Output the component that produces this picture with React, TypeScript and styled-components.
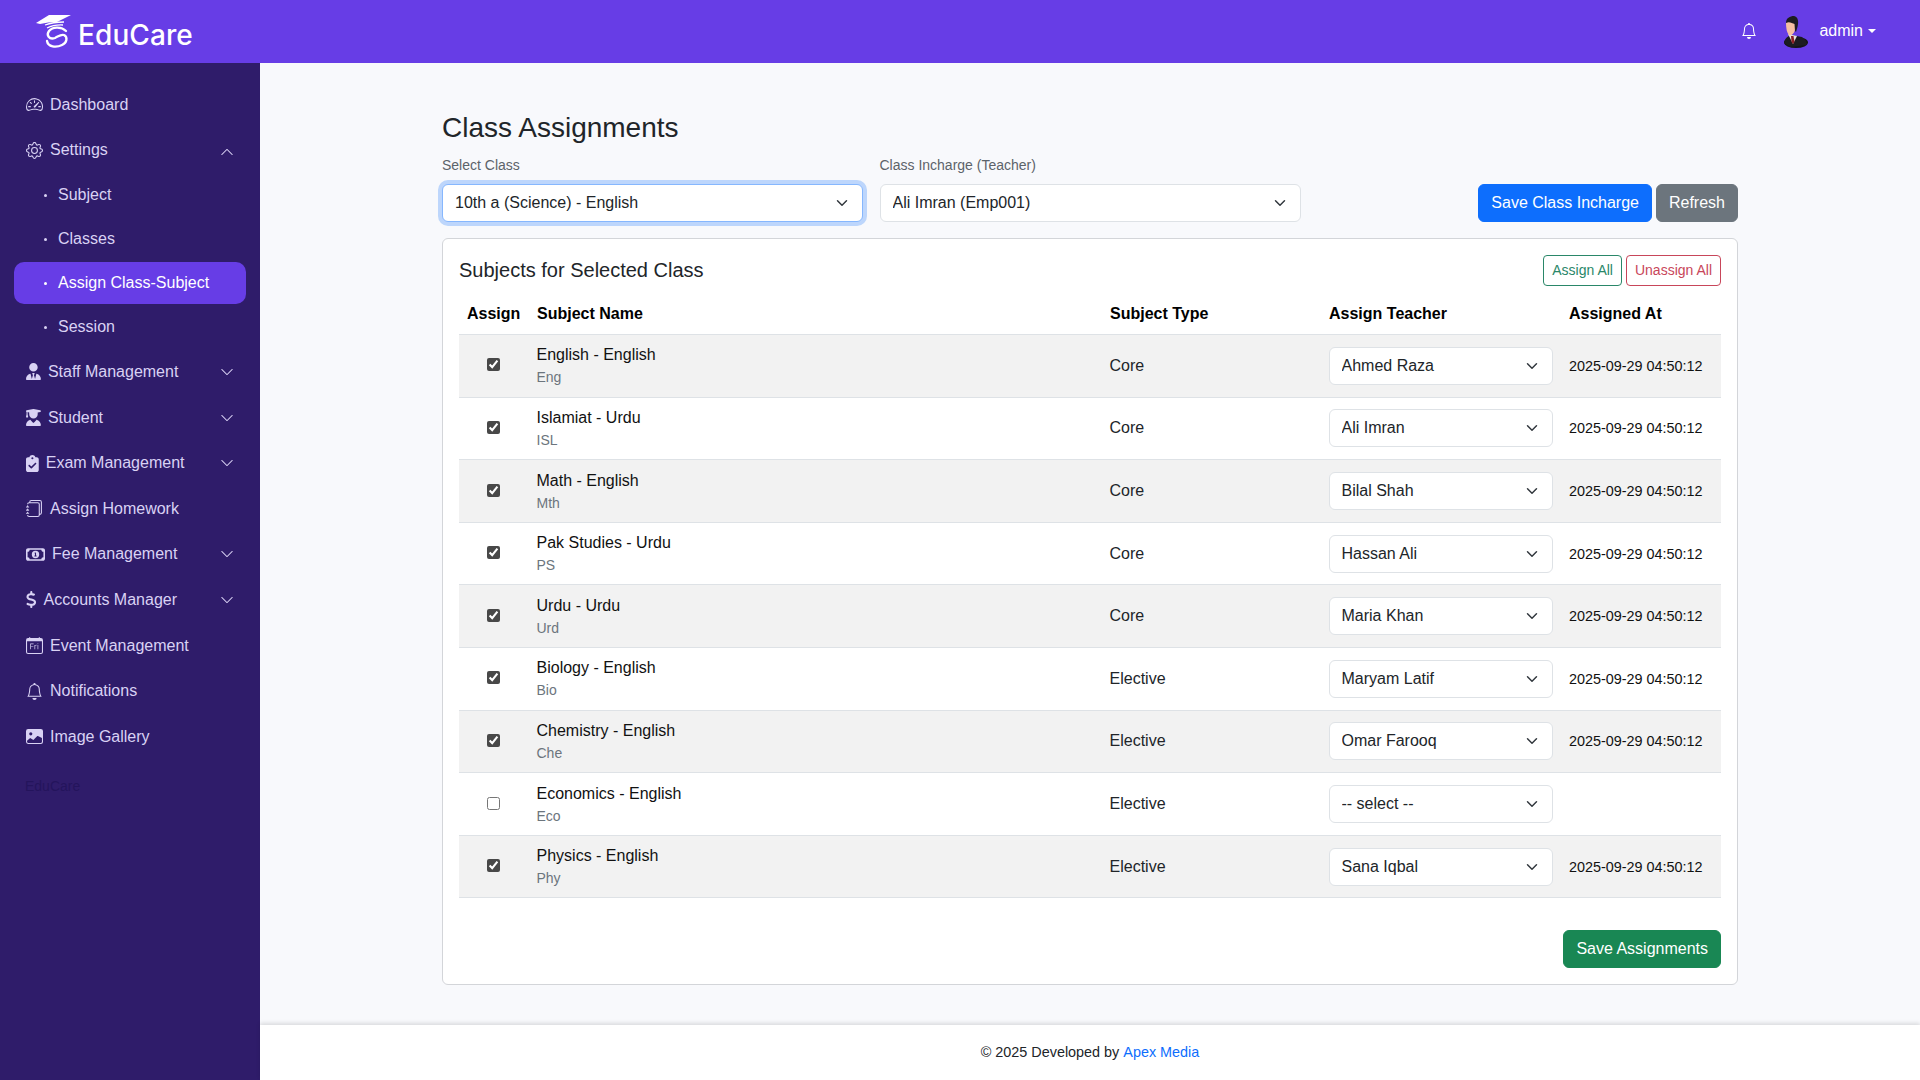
import React from "react";
import styled, { createGlobalStyle } from "styled-components";
import {
  BsBell,
  BsCalendarDay,
  BsChevronDown,
  BsChevronUp,
  BsGear,
  BsImageFill,
  BsJournals,
  BsSpeedometer2,
} from "react-icons/bs";
import {
  FaClipboardCheck,
  FaDollarSign,
  FaRegMoneyBill1,
  FaUserGraduate,
  FaUserTie,
} from "react-icons/fa6";

const chevron =
  "url(\"data:image/svg+xml,%3csvg xmlns='http://www.w3.org/2000/svg' viewBox='0 0 16 16'%3e%3cpath fill='none' stroke='%23343a40' stroke-linecap='round' stroke-linejoin='round' stroke-width='2' d='m2 5 6 6 6-6'/%3e%3c/svg%3e\")";

const GlobalStyle = createGlobalStyle`
  * {
    box-sizing: border-box;
  }
  html,
  body {
    margin: 0;
    padding: 0;
    height: 100%;
    overflow: hidden;
  }
  body {
    font-family: "Liberation Sans", Arial, sans-serif;
    font-size: 16px;
    line-height: 1.5;
    color: #212529;
  }
`;

const Page = styled.div`
  display: grid;
  grid-template-columns: 260px 1fr;
  grid-template-rows: 63px 1fr;
  height: 100vh;
`;

const Topbar = styled.header`
  grid-column: 1 / 3;
  background: #673de6;
  display: flex;
  align-items: center;
  justify-content: space-between;
  padding: 0 44px 0 36px;
`;

const Brand = styled.div`
  display: flex;
  align-items: flex-end;
  gap: 6px;
  color: #fff;
  padding-bottom: 1px;
`;

const BrandName = styled.span`
  font-family: Inter, "Liberation Sans", sans-serif;
  font-size: 28px;
  font-weight: 500;
  line-height: 34px;
  letter-spacing: 0.1px;
  margin-bottom: -3px;
`;

const UserArea = styled.div`
  display: flex;
  align-items: center;
  color: #fff;
  font-size: 16px;

  svg.bell {
    width: 16px;
    height: 16px;
    margin-right: 25px;
    margin-bottom: 2px;
  }
`;

const UserName = styled.span`
  margin-left: 11.5px;
  margin-bottom: 2px;
  display: flex;
  align-items: center;
  gap: 5px;

  &::after {
    content: "";
    border-top: 4px solid #fff;
    border-left: 4px solid transparent;
    border-right: 4px solid transparent;
  }
`;

const Sidebar = styled.nav`
  background: #2f1c6a;
  padding-top: 19px;
  color: #d9d2f4;
`;

const NavItem = styled.div<{ $iconWidth?: number }>`
  height: 45.6px;
  display: flex;
  align-items: center;
  gap: 7px;
  padding: 0 26px 0 26px;

  > svg:first-child {
    width: ${({ $iconWidth }) => $iconWidth ?? 17}px;
    height: 17px;
    flex: none;
  }
`;

const Caret = styled.span<{ $up?: boolean }>`
  margin-left: auto;
  display: flex;
  padding-top: ${({ $up }) => ($up ? "4px" : "0")};

  svg {
    width: 14px;
    height: 14px;
  }
`;

const SubItem = styled.div<{ $active?: boolean }>`
  height: ${({ $active }) => ($active ? "42px" : "44px")};
  margin: ${({ $active }) => ($active ? "1px 14px" : "0 14px")};
  padding-left: 30px;
  display: flex;
  align-items: center;
  gap: 11px;
  border-radius: 10px;
  background: ${({ $active }) => ($active ? "#673de6" : "transparent")};
  color: ${({ $active }) => ($active ? "#fff" : "#d9d2f4")};

  &::before {
    content: "";
    width: 3px;
    height: 3px;
    border-radius: 50%;
    background: currentColor;
  }
`;

const SidebarFoot = styled.div`
  padding: 16px 25px;
  font-size: 14px;
  color: #24145c;
`;

const Main = styled.main`
  background: #f8f9fc;
  display: flex;
  flex-direction: column;
  min-height: 0;
`;

const Content = styled.div`
  flex: 1;
  width: 1296px;
  margin: 0 auto;
  padding-top: 48px;
`;

const Title = styled.h3`
  margin: 0 0 10px;
  font-size: 28px;
  font-weight: 400;
  line-height: 1.2;
`;

const Toolbar = styled.div`
  display: grid;
  grid-template-columns: 421px 421.5px 1fr;
  column-gap: 16.5px;
  align-items: end;
`;

const Field = styled.div`
  display: flex;
  flex-direction: column;
  gap: 8px;
`;

const Label = styled.label`
  font-size: 14px;
  line-height: 21px;
  color: #5c636a;
`;

const Select = styled.select<{ $focused?: boolean }>`
  appearance: none;
  display: block;
  width: 100%;
  height: 38px;
  padding: 6px 36px 6px 12px;
  font: inherit;
  color: #212529;
  background-color: #fff;
  background-image: ${chevron};
  background-repeat: no-repeat;
  background-position: right 12px center;
  background-size: 16px 12px;
  border: 1px solid ${({ $focused }) => ($focused ? "#86b7fe" : "#dee2e6")};
  border-radius: 6px;
  outline: 0;
  box-shadow: ${({ $focused }) =>
    $focused ? "0 0 0 4px rgba(13, 110, 253, 0.25)" : "none"};
`;

const ToolbarActions = styled.div`
  display: flex;
  justify-content: flex-end;
  gap: 4px;
`;

const Button = styled.button<{ $bg: string }>`
  height: 38px;
  padding: 6px 12px;
  font: inherit;
  color: #fff;
  background: ${({ $bg }) => $bg};
  border: 1px solid ${({ $bg }) => $bg};
  border-radius: 6px;
`;

const Card = styled.section`
  margin-top: 16px;
  height: 747px;
  background: #fff;
  border: 1px solid #d3d5d9;
  border-radius: 6px;
  padding: 16px;
`;

const CardHead = styled.div`
  display: flex;
  justify-content: space-between;
  align-items: center;
  margin-bottom: 8px;
`;

const CardTitle = styled.h5`
  margin: 0;
  font-size: 20px;
  font-weight: 400;
  line-height: 1.2;
`;

const CardActions = styled.div`
  display: flex;
  gap: 4px;
`;

const OutlineButton = styled.button<{ $color: string }>`
  height: 31px;
  padding: 4px 8px;
  font: inherit;
  font-size: 14px;
  line-height: 21px;
  color: ${({ $color }) => $color};
  background: #fff;
  border: 1px solid ${({ $color }) => $color};
  border-radius: 4px;
`;

const Table = styled.table`
  width: 1262px;
  table-layout: fixed;
  border-collapse: collapse;
`;

const Th = styled.th<{ $width: number }>`
  width: ${({ $width }) => $width}px;
  height: 41px;
  padding: 8px;
  text-align: left;
  font-weight: 700;
  color: #000;
  vertical-align: middle;
`;

const Row = styled.tr<{ $striped: boolean }>`
  background: ${({ $striped }) => ($striped ? "#f2f2f2" : "#fff")};
  border-top: 1px solid #dee2e6;
  border-bottom: 1px solid #dee2e6;
`;

const Td = styled.td`
  height: 62.6px;
  padding: 0 8px 0 7.5px;
  vertical-align: middle;
  text-align: left;
`;

const Check = styled.input.attrs({ type: "checkbox", readOnly: true })`
  display: block;
  width: 13px;
  height: 13px;
  margin: -2px auto 0;
  accent-color: #484848;
`;

const SubjectName = styled.div`
  color: #111;
  line-height: 24px;
`;

const SubjectCode = styled.div`
  font-size: 14px;
  line-height: 21px;
  color: #6c757d;
`;

const Stamp = styled.span`
  font-size: 14.4px;
  color: #111;
  white-space: nowrap;
  margin-left: 0.5px;
`;

const CardFoot = styled.div`
  display: flex;
  justify-content: flex-end;
  margin-top: 32px;
`;

const Footer = styled.footer`
  height: 55px;
  flex: none;
  margin-top: 40px;
  background: #fff;
  box-shadow: 0 -2px 4px rgba(0, 0, 0, 0.12);
  display: flex;
  align-items: center;
  justify-content: center;
  font-size: 14.4px;
`;

const FooterLink = styled.a`
  color: #0d6efd;
  text-decoration: none;
  margin-left: 4px;
`;

function Logo() {
  return (
    <svg width="36" height="36" viewBox="0 0 36 36" fill="none" aria-hidden="true">
      <path d="M0 10 L13 2 L35 2 L21 9 Q12 9 4 11 Z" fill="#fff" />
      <path d="M9 12 Q17 9 28 9" stroke="#fff" strokeWidth="1.3" />
      <path d="M11 15 Q18 11.5 27 12" stroke="#fff" strokeWidth="1.3" />
      <path
        d="M30 18 C26 14 17 13 13 18 C10 22 13 27 19 25 C23 23 25 21 28 22 C32 24 31 30 26 32 C20 35 12 34 11 28"
        stroke="#fff"
        strokeWidth="2.3"
        strokeLinecap="round"
      />
    </svg>
  );
}

function Avatar() {
  return (
    <svg width="26" height="32" viewBox="0 0 26 32" aria-hidden="true">
      <ellipse cx="14" cy="26.5" rx="12" ry="5.5" fill="#141418" />
      <path d="M2 27 C3 22 6 20 9 19 L20 21 C23 23 25 26 25 29 L8 31 Z" fill="#1c1c22" />
      <path d="M6 18 L11 28 L15 20 Z" fill="#e6e2de" />
      <path d="M9 20 L11.5 20 L12.5 26 L11 28 L9.5 26 Z" fill="#8c1f24" />
      <path d="M4 7 C6 4 12 5 13 8 L13 14 C12 18 9 20 7 19 C5 17 4 12 4 7 Z" fill="#f6c0a2" />
      <path d="M4 7 C4 2 8 0 12 0 C16 1 17 5 15.5 11 L14 16 L13 15 L12.5 8 C10 7 7 5 4 7 Z" fill="#1d1d20" />
    </svg>
  );
}

const mainNav = [
  { label: "Staff Management", icon: <FaUserTie />, w: 14.9, caret: true },
  { label: "Student", icon: <FaUserGraduate />, w: 14.9, caret: true },
  { label: "Exam Management", icon: <FaClipboardCheck />, w: 12.75, caret: true },
  { label: "Assign Homework", icon: <BsJournals />, w: 17, caret: false },
  { label: "Fee Management", icon: <FaRegMoneyBill1 />, w: 19, caret: true },
  { label: "Accounts Manager", icon: <FaDollarSign />, w: 10.6, caret: true },
  { label: "Event Management", icon: <BsCalendarDay />, w: 17, caret: false },
  { label: "Notifications", icon: <BsBell />, w: 17, caret: false },
  { label: "Image Gallery", icon: <BsImageFill />, w: 17, caret: false },
];

const subjects = [
  { name: "English - English", code: "Eng", type: "Core", teacher: "Ahmed Raza", on: true },
  { name: "Islamiat - Urdu", code: "ISL", type: "Core", teacher: "Ali Imran", on: true },
  { name: "Math - English", code: "Mth", type: "Core", teacher: "Bilal Shah", on: true },
  { name: "Pak Studies - Urdu", code: "PS", type: "Core", teacher: "Hassan Ali", on: true },
  { name: "Urdu - Urdu", code: "Urd", type: "Core", teacher: "Maria Khan", on: true },
  { name: "Biology - English", code: "Bio", type: "Elective", teacher: "Maryam Latif", on: true },
  { name: "Chemistry - English", code: "Che", type: "Elective", teacher: "Omar Farooq", on: true },
  { name: "Economics - English", code: "Eco", type: "Elective", teacher: "-- select --", on: false },
  { name: "Physics - English", code: "Phy", type: "Elective", teacher: "Sana Iqbal", on: true },
];

export default function App() {
  return (
    <>
      <GlobalStyle />
      <Page>
        <Topbar>
          <Brand>
            <Logo />
            <BrandName>EduCare</BrandName>
          </Brand>
          <UserArea>
            <BsBell className="bell" />
            <Avatar />
            <UserName>admin</UserName>
          </UserArea>
        </Topbar>
        <Sidebar>
          <NavItem>
            <BsSpeedometer2 />
            Dashboard
          </NavItem>
          <NavItem>
            <BsGear />
            Settings
            <Caret $up>
              <BsChevronUp />
            </Caret>
          </NavItem>
          <SubItem>Subject</SubItem>
          <SubItem>Classes</SubItem>
          <SubItem $active>Assign Class-Subject</SubItem>
          <SubItem>Session</SubItem>
          {mainNav.map((item) => (
            <NavItem key={item.label} $iconWidth={item.w}>
              {item.icon}
              {item.label}
              {item.caret && (
                <Caret>
                  <BsChevronDown />
                </Caret>
              )}
            </NavItem>
          ))}
          <SidebarFoot>EduCare</SidebarFoot>
        </Sidebar>
        <Main>
          <Content>
            <Title>Class Assignments</Title>
            <Toolbar>
              <Field>
                <Label>Select Class</Label>
                <Select $focused defaultValue="10th a (Science) - English">
                  <option>10th a (Science) - English</option>
                </Select>
              </Field>
              <Field>
                <Label>Class Incharge (Teacher)</Label>
                <Select defaultValue="Ali Imran (Emp001)">
                  <option>Ali Imran (Emp001)</option>
                </Select>
              </Field>
              <ToolbarActions>
                <Button $bg="#0d6efd">Save Class Incharge</Button>
                <Button $bg="#6c757d">Refresh</Button>
              </ToolbarActions>
            </Toolbar>
            <Card>
              <CardHead>
                <CardTitle>Subjects for Selected Class</CardTitle>
                <CardActions>
                  <OutlineButton $color="#2a8769">Assign All</OutlineButton>
                  <OutlineButton $color="#c8465a">Unassign All</OutlineButton>
                </CardActions>
              </CardHead>
              <Table>
                <thead>
                  <tr>
                    <Th $width={70}>Assign</Th>
                    <Th $width={573}>Subject Name</Th>
                    <Th $width={219}>Subject Type</Th>
                    <Th $width={240}>Assign Teacher</Th>
                    <Th $width={160}>Assigned At</Th>
                  </tr>
                </thead>
                <tbody>
                  {subjects.map((s, i) => (
                    <Row key={s.code} $striped={i % 2 === 0}>
                      <Td>
                        <Check defaultChecked={s.on} />
                      </Td>
                      <Td>
                        <SubjectName>{s.name}</SubjectName>
                        <SubjectCode>{s.code}</SubjectCode>
                      </Td>
                      <Td>{s.type}</Td>
                      <Td>
                        <Select defaultValue={s.teacher}>
                          <option>{s.teacher}</option>
                        </Select>
                      </Td>
                      <Td>{s.on && <Stamp>2025-09-29 04:50:12</Stamp>}</Td>
                    </Row>
                  ))}
                </tbody>
              </Table>
              <CardFoot>
                <Button $bg="#198754">Save Assignments</Button>
              </CardFoot>
            </Card>
          </Content>
          <Footer>
            © 2025 Developed by<FooterLink href="#">Apex Media</FooterLink>
          </Footer>
        </Main>
      </Page>
    </>
  );
}
